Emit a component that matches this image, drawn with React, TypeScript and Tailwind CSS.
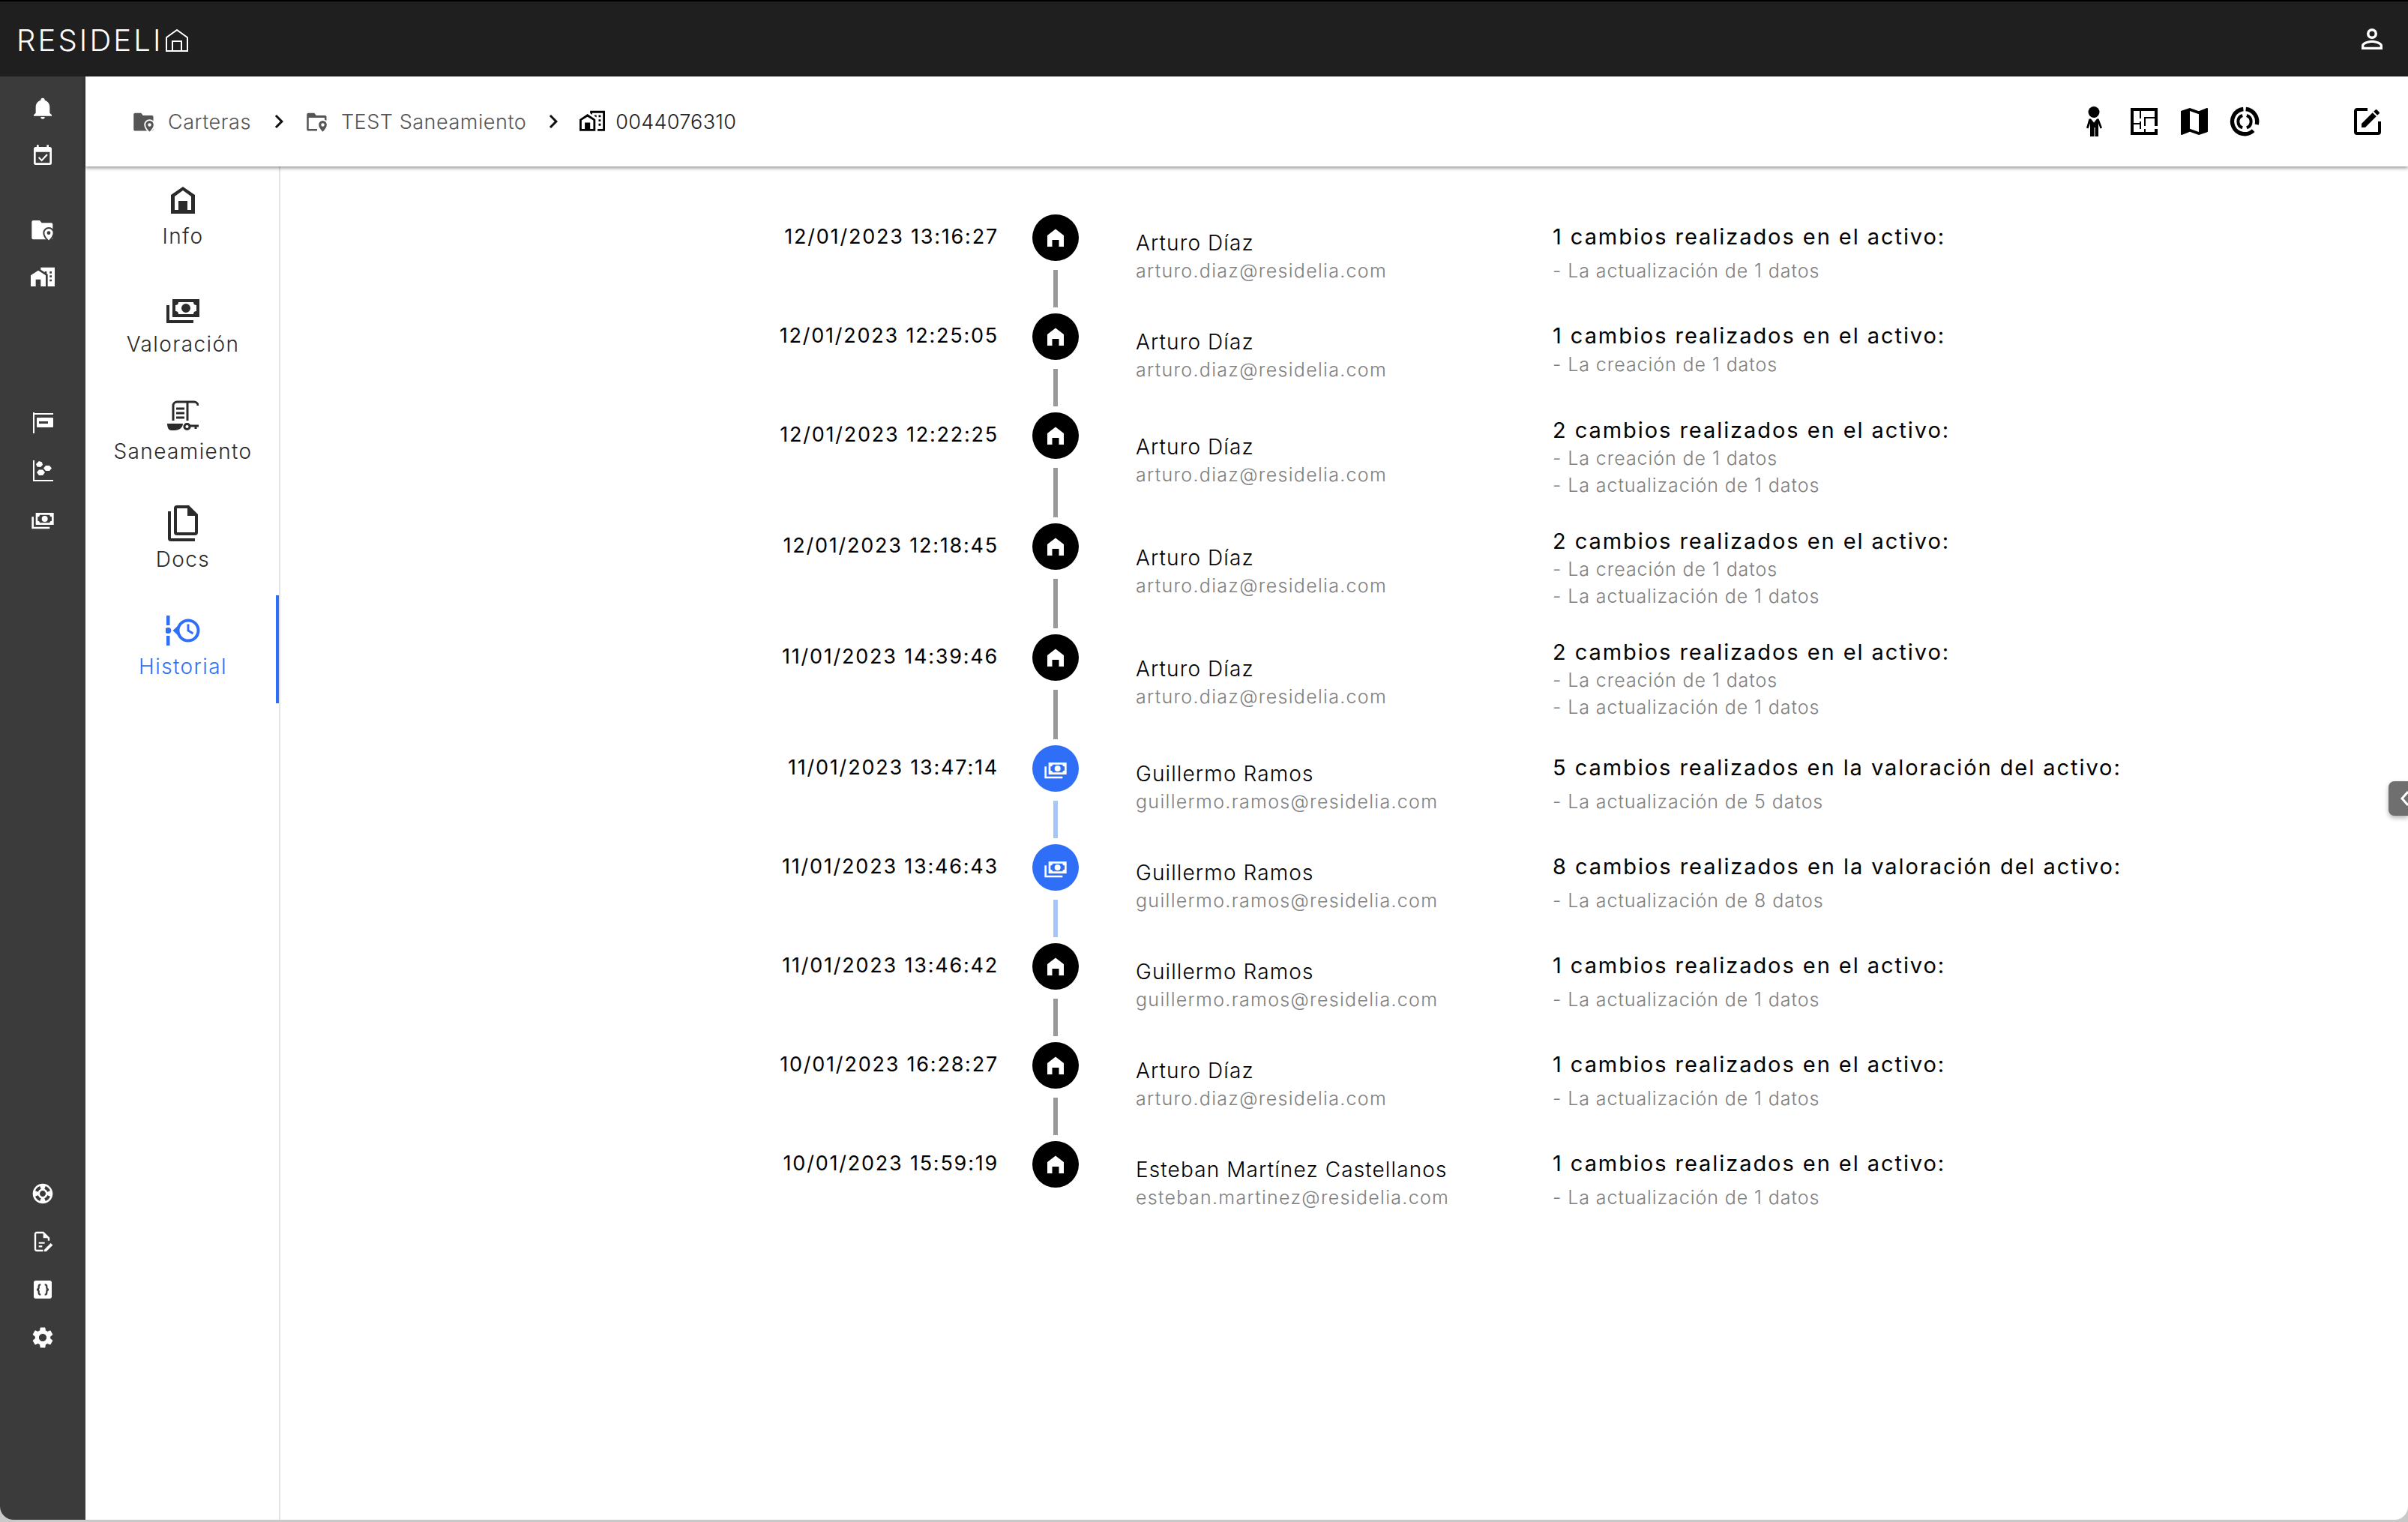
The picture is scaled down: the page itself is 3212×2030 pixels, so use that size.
import { MdChevronRight, MdSettings, MdSupport } from 'react-icons/md';

const CASH = 'M5,6H23V18H5V6M14,9A3,3 0 0,1 17,12A3,3 0 0,1 14,15A3,3 0 0,1 11,12A3,3 0 0,1 14,9M9,8A2,2 0 0,1 7,10V14A2,2 0 0,1 9,16H19A2,2 0 0,1 21,14V10A2,2 0 0,1 19,8H9M1,10H3V20H19V22H1V10Z';
const HOME_CITY = 'M0,21V10L7.5,5L15,10V21H10V14H5V21H0M24,2V21H17V8.93L16,8.27V6H14V6.93L10,4.27V2H24M21,14H19V16H21V14M21,10H19V12H21V10M21,6H19V8H21V6Z';
const HOME_CITY_OUTLINE = 'M10,2V4.26L12,5.59V4H22V19H17V21H24V2H10M7.5,5L0,10V21H15V10L7.5,5M14,6V6.93L15.61,8H16V6H14M18,6V8H20V6H18M7.5,7.5L13,11V19H10V13H5V19H2V11L7.5,7.5M18,10V12H20V10H18M18,14V16H20V14H18Z';

type IconProps = { size?: number; className?: string };

const Mdi = ({ d, size = 24, className }: IconProps & { d: string }) => (
  <svg width={size} height={size} viewBox="0 0 24 24" fill="currentColor" className={className}>
    <path d={d} />
  </svg>
);

const FolderPin = ({ size = 30, hole, outline = false }: IconProps & { hole: string; outline?: boolean }) => (
  <svg width={size} height={size} viewBox="0 0 24 24" fill="currentColor">
    {outline ? (
      <path d="M1 4.5A1.5 1.5 0 0 1 2.500 3H9l2 2.500h9.500A1.500 1.500 0 0 1 22 7v4h-2V8H3v12h9v2H2.500A1.500 1.500 0 0 1 1 20.500z" />
    ) : (
      <path d="M1 4.500A1.500 1.500 0 0 1 2.500 3H9l2 2.500h9.500A1.500 1.500 0 0 1 22 7v13.500a1.500 1.500 0 0 1-1.500 1.500h-18A1.500 1.500 0 0 1 1 20.500z" />
    )}
    <path d="M18 10.500a5 5 0 0 0-5 5c0 3.500 5 8.500 5 8.500s5-5 5-8.500a5 5 0 0 0-5-5z" stroke={hole} strokeWidth="1.500" />
    <circle cx="18" cy="15.500" r="1.800" fill={hole} />
  </svg>
);

const CalendarCheck = () => (
  <svg width="32" height="32" viewBox="0 0 24 24" fill="none">
    <path fill="currentColor" d="M19 3h-1V1h-2v2H8V1H6v2H5a2 2 0 0 0-2 2v14a2 2 0 0 0 2 2h14a2 2 0 0 0 2-2V5a2 2 0 0 0-2-2zm0 16H5V8h14v11z" />
    <path d="M16.500 10.500l-5.500 6-3-3" stroke="currentColor" strokeWidth="1.600" />
  </svg>
);

const SignIcon = () => (
  <svg width="30" height="30" viewBox="0 0 30 30" fill="currentColor">
    <rect x="2" y="1" width="2" height="28" />
    <rect x="2" y="2" width="27" height="2" />
    <path fillRule="evenodd" d="M8 8h20a1 1 0 0 1 1 1v11a1 1 0 0 1-1 1H8a1 1 0 0 1-1-1V9a1 1 0 0 1 1-1zm2 5v3h12v-3z" />
  </svg>
);

const BubbleIcon = () => (
  <svg width="30" height="30" viewBox="0 0 30 30" fill="currentColor">
    <rect x="2" y="1" width="2" height="28" />
    <rect x="2" y="27" width="27" height="2" />
    <path d="M10 2l4 1.500 1 3.500-3 3-4.500-.5L6 6z" />
    <path d="M19 8l5 0 3 3.500-3 3.500h-5l-3-3.500z" />
    <path d="M10 13.500h5l3 3.500-3 4h-5l-3-4z" />
  </svg>
);

const DocEdit = () => (
  <svg width="32" height="32" viewBox="0 0 24 24" fill="none">
    <path d="M12.500 21H6a1.500 1.500 0 0 1-1.500-1.500v-15A1.500 1.500 0 0 1 6 3h6.500l5.500 5.500V11" stroke="currentColor" strokeWidth="1.800" />
    <path d="M12.500 3v5.500H18z M8 12.500h6v1.600H8z M8 16h3.500v1.600H8z" fill="currentColor" />
    <path d="M13.500 20l6.500-6.500 2 2-6.500 6.500h-2z" fill="currentColor" />
  </svg>
);

const BracesBox = () => (
  <svg width="32" height="32" viewBox="0 0 24 24" fill="none">
    <rect x="3" y="3" width="18" height="18" rx="2" fill="currentColor" />
    <path d="M10 7c-2 0-2 1-2 3 0 1-.5 2-2 2 1.500 0 2 1 2 2 0 2 0 3 2 3M14 7c2 0 2 1 2 3 0 1 .5 2 2 2-1.500 0-2 1-2 2 0 2 0 3-2 3" stroke="#3b3b3b" strokeWidth="1.700" />
  </svg>
);

const PersonSuit = () => (
  <svg width="24" height="40" viewBox="0 0 24 40" fill="currentColor">
    <circle cx="12" cy="7.500" r="7.500" />
    <path d="M5.500 16.500h2.500l4 5 4-5h2.500l4.500 12-2.500 1-2.500-7v17.500h-4.500V28h-1v12H7V22.500l-2.500 7L2 28.500z" />
  </svg>
);

const Donut = () => (
  <svg width="40" height="40" viewBox="0 0 24 24" fill="none" stroke="currentColor">
    <path strokeWidth="3.200" d="M13 2.100A10 10 0 0 1 21.700 14.500" />
    <path strokeWidth="3.200" d="M19 19.300A10 10 0 1 1 11 2.100" />
    <path strokeWidth="2.400" d="M10.300 7.200A5.200 5.200 0 0 0 10.300 17" />
    <path strokeWidth="2.400" d="M13.700 7.200A5.200 5.200 0 0 1 13.700 17" />
  </svg>
);

const InfoIcon = () => (
  <svg width="32" height="36" viewBox="0 0 32 36" fill="currentColor">
    <path fillRule="evenodd" d="M16 0L32 11V36H0V11zM16 5L5 13V31H27V13z" />
    <rect x="10" y="19" width="12" height="17" />
  </svg>
);

const ScriptKey = () => (
  <svg width="42" height="42" viewBox="0 0 42 42" fill="none" stroke="currentColor" strokeWidth="3">
    <path d="M8 28V8a5 5 0 0 1 5-5h23a5 5 0 0 1 5 5" />
    <path d="M27 4v24" />
    <path d="M12 12h11M12 18h11M12 24h11" />
    <path stroke="none" fill="currentColor" d="M0 32h21c0 5-5 9-11 9H5c-3 0-5-4-5-9z" />
    <circle cx="26.500" cy="36" r="3.600" />
    <path d="M30 35h12M38 35v4" />
  </svg>
);

const DocsIcon = () => (
  <svg width="48" height="48" viewBox="0 0 24 24" fill="currentColor">
    <path d="M16,0H8A2,2 0 0,0 6,2V18A2,2 0 0,0 8,20H20A2,2 0 0,0 22,18V6L16,0M20,18H8V2H15V7H20V18M4,4V22H20V24H4A2,2 0 0,1 2,22V4H4Z" />
    <path d="M15 1l6 6h-6z" />
  </svg>
);

const HistoryIcon = () => (
  <svg width="46" height="40" viewBox="0 0 46 40" fill="none">
    <path fill="currentColor" d="M1 0h4.500v13H1zM1 27h4.500v13H1z" />
    <circle cx="3.300" cy="20" r="4" fill="currentColor" />
    <path fill="currentColor" d="M9.500 20l7-6.500v13z" />
    <circle cx="30" cy="20" r="13.500" stroke="currentColor" strokeWidth="4" />
    <path d="M30 11.500V20l6.500 4" stroke="currentColor" strokeWidth="3" />
  </svg>
);

const SmallHouse = () => (
  <svg width="24" height="24" viewBox="0 0 24 24" fill="currentColor">
    <path d="M12 0.500L23 9V24H16.500V15H7.500V24H1V9z" />
  </svg>
);

const LogoHouse = () => (
  <svg width="30" height="30" viewBox="0 0 30 30" fill="none" stroke="white" strokeWidth="2">
    <path d="M1 29V11L15 1l14 10v18z" />
    <path d="M9 29V16h12v13" />
  </svg>
);

type Row = {
  date: string;
  name: string;
  email: string;
  title: string;
  lines: string[];
  kind: 'short' | 'tight' | 'tall';
  value?: boolean;
};

const arturo = { name: 'Arturo Díaz', email: 'arturo.diaz@residelia.com' };
const guillermo = { name: 'Guillermo Ramos', email: 'guillermo.ramos@residelia.com' };
const upd = '- La actualización de 1 datos';
const cre = '- La creación de 1 datos';
const t1 = '1 cambios realizados en el activo:';
const t2 = '2 cambios realizados en el activo:';

const rows: Row[] = [
  { date: '12/01/2023 13:16:27', ...arturo, title: t1, lines: [upd], kind: 'short' },
  { date: '12/01/2023 12:25:05', ...arturo, title: t1, lines: [cre], kind: 'tight' },
  { date: '12/01/2023 12:22:25', ...arturo, title: t2, lines: [cre, upd], kind: 'tall' },
  { date: '12/01/2023 12:18:45', ...arturo, title: t2, lines: [cre, upd], kind: 'tall' },
  { date: '11/01/2023 14:39:46', ...arturo, title: t2, lines: [cre, upd], kind: 'tall' },
  { date: '11/01/2023 13:47:14', ...guillermo, title: '5 cambios realizados en la valoración del activo:', lines: ['- La actualización de 5 datos'], kind: 'short', value: true },
  { date: '11/01/2023 13:46:43', ...guillermo, title: '8 cambios realizados en la valoración del activo:', lines: ['- La actualización de 8 datos'], kind: 'short', value: true },
  { date: '11/01/2023 13:46:42', ...guillermo, title: t1, lines: [upd], kind: 'short' },
  { date: '10/01/2023 16:28:27', ...arturo, title: t1, lines: [upd], kind: 'short' },
  { date: '10/01/2023 15:59:19', name: 'Esteban Martínez Castellanos', email: 'esteban.martinez@residelia.com', title: t1, lines: [upd], kind: 'short' }
];

const navItems = [
  { label: 'Info', icon: <InfoIcon /> },
  { label: 'Valoración', icon: <Mdi d={CASH} size={48} /> },
  { label: 'Saneamiento', icon: <ScriptKey /> },
  { label: 'Docs', icon: <DocsIcon /> },
  { label: 'Historial', icon: <HistoryIcon />, active: true }
];

const SideSlot = ({ children }: { children: React.ReactNode }) => (
  <div className="h-[64px] flex items-center justify-center">{children}</div>
);

export default function App() {
  return (
    <div className="h-[2030px] bg-[#c9c9c9] font-['Inter',sans-serif]">
      <div className="relative h-[2027px] rounded-b-[18px] overflow-hidden flex flex-col bg-white">
        {/* Top bar */}
        <header className="h-[102px] shrink-0 bg-[#1f1f1f] border-t-2 border-black flex items-center justify-between pl-[22px] pr-[27px]">
          <div className="flex items-center gap-[3px] pt-[4px]">
            <span className="text-[40px] font-light text-white tracking-[0.078em] leading-none">RESIDELI</span>
            <LogoHouse />
          </div>
          <Mdi
            size={42}
            className="text-white"
            d="M12,4A4,4 0 0,1 16,8A4,4 0 0,1 12,12A4,4 0 0,1 8,8A4,4 0 0,1 12,4M12,6A2,2 0 0,0 10,8A2,2 0 0,0 12,10A2,2 0 0,0 14,8A2,2 0 0,0 12,6M12,13C14.67,13 20,14.33 20,17V20H4V17C4,14.33 9.33,13 12,13M12,14.9C9.03,14.9 5.9,16.36 5.9,17V18.1H18.1V17C18.1,16.36 14.97,14.9 12,14.9Z"
          />
        </header>

        <div className="flex-1 flex min-h-0">
          {/* Dark rail */}
          <aside className="w-[114px] shrink-0 bg-[#3b3b3b] text-white flex flex-col">
            <div className="mt-[10px]">
              <SideSlot>
                <Mdi size={32} d="M21,19V20H3V19L5,17V11C5,7.9 7.03,5.17 10,4.29C10,4.19 10,4.1 10,4A2,2 0 0,1 12,2A2,2 0 0,1 14,4C14,4.1 14,4.19 14,4.29C16.97,5.17 19,7.9 19,11V17L21,19M14,21A2,2 0 0,1 12,23A2,2 0 0,1 10,21" />
              </SideSlot>
              <SideSlot><CalendarCheck /></SideSlot>
            </div>
            <div className="mt-[34px]">
              <SideSlot><FolderPin size={32} hole="#3b3b3b" /></SideSlot>
              <SideSlot><Mdi d={HOME_CITY} size={32} /></SideSlot>
            </div>
            <div className="mt-[130px]">
              <SideSlot><SignIcon /></SideSlot>
              <SideSlot><BubbleIcon /></SideSlot>
              <SideSlot><Mdi d={CASH} size={32} /></SideSlot>
            </div>
            <div className="mt-auto mb-[211px]">
              <SideSlot><MdSupport size={32} /></SideSlot>
              <SideSlot><DocEdit /></SideSlot>
              <SideSlot><BracesBox /></SideSlot>
              <SideSlot><MdSettings size={34} /></SideSlot>
            </div>
          </aside>

          <div className="flex-1 min-w-0 flex flex-col">
            {/* Breadcrumb */}
            <div className="relative z-10 h-[120px] shrink-0 bg-white shadow-[0_2px_5px_rgba(0,0,0,0.45)] flex items-center pl-[63px] pr-[30px]">
              <span className="text-[#555555]"><FolderPin hole="#ffffff" /></span>
              <span className="ml-[17px] mt-[2px] text-[27px] text-[#555555] font-light tracking-[0.02em]">Carteras</span>
              <MdChevronRight size={36} className="ml-[19px] text-[#111111]" />
              <span className="ml-[18px] text-[#555555]"><FolderPin hole="#ffffff" outline /></span>
              <span className="ml-[17px] mt-[2px] text-[27px] text-[#555555] font-light tracking-[0.02em]">TEST Saneamiento</span>
              <MdChevronRight size={36} className="ml-[18px] text-[#111111]" />
              <span className="ml-[17px] text-black"><Mdi d={HOME_CITY_OUTLINE} size={34} /></span>
              <span className="ml-[14px] mt-[2px] text-[27px] text-[#222222] font-light tracking-[0.01em]">0044076310</span>
              <div className="ml-auto flex items-center gap-[19px] text-black">
                <div className="w-[48px] flex justify-center"><PersonSuit /></div>
                <Mdi size={48} d="M10,5V10H9V5H5V13H9V12H10V17H9V14H5V19H12V17H13V19H19V17H21V21H3V3H21V15H19V10H13V15H12V9H19V5H10Z" />
                <Mdi size={48} d="M15,19L9,16.89V5L15,7.11M20.5,3C20.44,3 20.39,3 20.34,3L15,5.1L9,3L3.36,4.9C3.15,4.97 3,5.15 3,5.38V20.5A0.5,0.5 0 0,0 3.5,21C3.55,21 3.61,21 3.66,20.97L9,18.9L15,21L20.64,19.1C20.85,19 21,18.85 21,18.62V3.5A0.5,0.5 0 0,0 20.5,3Z" />
                <div className="w-[48px] flex justify-center"><Donut /></div>
                <Mdi size={48} className="ml-[97px]" d="M5,3C3.89,3 3,3.89 3,5V19A2,2 0 0,0 5,21H19A2,2 0 0,0 21,19V12H19V19H5V5H12V3H5M17.78,4C17.61,4 17.43,4.07 17.3,4.2L16.08,5.41L18.58,7.91L19.8,6.7C20.06,6.44 20.06,6 19.8,5.75L18.25,4.2C18.12,4.07 17.95,4 17.78,4M15.37,6.12L8,13.5V16H10.5L17.87,8.62L15.37,6.12Z" />
              </div>
            </div>

            <div className="flex-1 flex min-h-0">
              {/* Section tabs */}
              <nav className="w-[260px] shrink-0 -mt-[2px] border-r-2 border-[#e3e3e3]">
                {navItems.map((item) => (
                  <div
                    key={item.label}
                    className={`h-[143.5px] pt-[22px] pl-[6px] border-r-4 flex flex-col items-center ${
                      item.active ? 'text-[#2f6ef6] border-[#2f6ef6]' : 'text-[#2b2b2b] border-transparent'
                    }`}
                  >
                    <div className="h-[50px] flex items-center justify-center">{item.icon}</div>
                    <div className="mt-[5px] text-[28px] font-light leading-[36px] tracking-[0.05em]">{item.label}</div>
                  </div>
                ))}
              </nav>

              {/* Timeline */}
              <main className="flex-1 pt-[64px]">
                {rows.map((row, i) => {
                  const tall = row.kind === 'tall';
                  return (
                    <div key={row.date} className={`flex ${tall ? 'h-[148px]' : 'h-[132px]'}`}>
                      <div className="w-[958px] shrink-0 pt-[12px] text-right text-[27px] leading-[36px] text-black tracking-[0.066em]">
                        {row.date}
                      </div>
                      <div className="ml-[45px] w-[62px] shrink-0 flex flex-col items-center">
                        <div className={`w-[62px] h-[62px] rounded-full flex items-center justify-center text-white shrink-0 ${row.value ? 'bg-[#2f6ef6]' : 'bg-black'}`}>
                          {row.value ? <Mdi d={CASH} size={32} /> : <SmallHouse />}
                        </div>
                        {i < rows.length - 1 && (
                          <div className={`w-[6px] flex-1 mt-[12px] mb-[8px] ${row.value ? 'bg-[#a8c5f8]' : 'bg-[#999999]'}`} />
                        )}
                      </div>
                      <div className={`ml-[76px] w-[556px] shrink-0 ${tall ? 'pt-[28px]' : 'pt-[20px]'}`}>
                        <div className="text-[28px] leading-[36px] font-light text-black tracking-[0.04em]">{row.name}</div>
                        <div className="mt-[1px] text-[25px] leading-[36px] font-light text-[#808080] tracking-[0.052em]">{row.email}</div>
                      </div>
                      <div className={tall ? 'pt-[6px]' : 'pt-[12px]'}>
                        <div className="text-[29px] leading-[36px] text-black tracking-[0.067em]">{row.title}</div>
                        <div className={row.kind === 'short' ? 'mt-[9px]' : row.kind === 'tight' ? 'mt-[2px]' : 'mt-[0.5px]'}>
                          {row.lines.map((line) => (
                            <div key={line} className="text-[25px] leading-[36px] font-light text-[#808080] tracking-[0.037em]">{line}</div>
                          ))}
                        </div>
                      </div>
                    </div>
                  );
                })}
              </main>
            </div>
          </div>
        </div>

        {/* Collapsed right panel handle */}
        <div className="absolute right-0 top-[1042px] w-[26px] h-[46px] rounded-l-[8px] bg-[#6f6f6f] shadow-[0_3px_6px_rgba(0,0,0,0.3)] overflow-hidden">
          <svg width="26" height="46" viewBox="0 0 26 46" fill="none" stroke="white" strokeWidth="3">
            <path d="M26 14L18 23l8 9" />
          </svg>
        </div>
      </div>
    </div>
  );
}
